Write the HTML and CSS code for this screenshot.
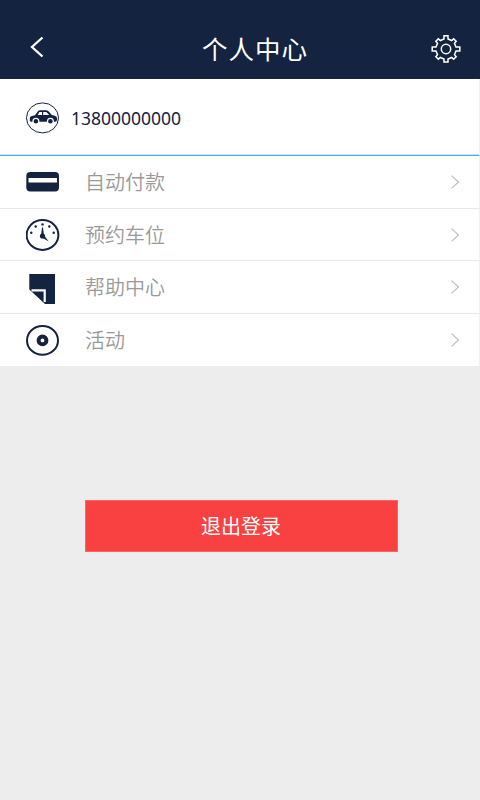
FILE: index.html
```html
<!DOCTYPE html>
<html lang="zh-CN">
<head>
<meta charset="utf-8">
<title>个人中心</title>
<link rel="stylesheet" href="styles.css">
</head>
<body>
<header class="header">
  <svg class="back" width="16" height="22" viewBox="0 0 16 22"><path d="M13.5 1.5L3 11L13.5 20.5"/></svg>
  <h1 class="title">个人中心</h1>
  <svg class="gear" width="30" height="30" viewBox="-15 -15 30 30">
    <path d="M-2-10V-13.3H2V-10L5.66-8.49L7.64-10.18L10.18-7.64L8.49-5.66L10-2H13.8V2H10L8.49 5.66L10.18 7.64L7.64 10.18L5.66 8.49L2 10V13H-2V10L-5.66 8.49L-7.64 10.18L-10.18 7.64L-8.49 5.66L-10 2H-13.8V-2H-10L-8.49-5.66L-10.18-7.64L-7.64-10.18L-5.66-8.49Z"/>
    <circle r="4.7"/>
  </svg>
</header>
<main>
  <section class="profile">
    <svg class="icon" width="34" height="34" viewBox="0 0 34 34">
      <ellipse class="thin" cx="16.5" cy="16.9" rx="16" ry="15"/>
      <path class="fill" d="M3.8 19.5V16.8Q4 15 9 14.2L11.3 11Q12.2 9.3 14 9.3H20.3Q22 9.3 23 10.8L25.8 13.9Q31 14.8 31 17V19Q31 20.7 29 20.7H5.6Q3.8 20.7 3.8 19.5Z"/>
      <path class="white" d="M11.7 14L13.4 11H16V14ZM17.2 11H20.3L23.2 14H17.2Z"/>
      <circle class="wheel" cx="9.9" cy="20.2" r="2.9"/><circle class="wheel" cx="24.4" cy="20.2" r="2.9"/>
    </svg>
    <span class="phone">13800000000</span>
  </section>
  <nav>
    <a class="row">
      <svg class="icon" width="34" height="34" viewBox="0 0 34 34"><rect class="fill" x=".3" y="7" width="32.7" height="19.5" rx="4"/><rect class="white" x="2.5" y="13" width="28.5" height="4.5"/></svg>
      <span class="label">自动付款</span>
      <svg class="arrow" width="10" height="14" viewBox="0 0 10 14"><path d="M1.5 .7L8.5 7L1.5 13.3"/></svg>
    </a>
    <a class="row short">
      <svg class="icon" width="34" height="34" viewBox="0 0 34 34">
        <ellipse class="ring" cx="16.5" cy="17" rx="15.9" ry="14.9"/>
        <circle class="fill" cx="16.5" cy="18" r="2.6"/>
        <path class="fill" d="M16 9.5H17L17.9 17H15.1ZM17.5 16.8L22.8 23.6L15.8 19.5Z"/>
        <g class="fill"><circle cx="16.5" cy="6.4" r="1.2"/><circle cx="9.7" cy="8.5" r="1.2"/><circle cx="23.3" cy="8.5" r="1.2"/><circle cx="5.3" cy="14.7" r="1.2"/><circle cx="27.7" cy="14.7" r="1.2"/></g>
      </svg>
      <span class="label">预约车位</span>
      <svg class="arrow" width="10" height="14" viewBox="0 0 10 14"><path d="M1.5 .7L8.5 7L1.5 13.3"/></svg>
    </a>
    <a class="row">
      <svg class="icon" width="34" height="34" viewBox="0 0 34 34"><path class="fill" d="M3.3 4H29V34H19L3.3 19.4Z"/><path class="fold" d="M5.5 20.3H18.7V32"/></svg>
      <span class="label">帮助中心</span>
      <svg class="arrow" width="10" height="14" viewBox="0 0 10 14"><path d="M1.5 .7L8.5 7L1.5 13.3"/></svg>
    </a>
    <a class="row">
      <svg class="icon" width="34" height="34" viewBox="0 0 34 34"><ellipse class="ring" cx="16.5" cy="17.4" rx="15.5" ry="14.4"/><circle class="disc" cx="16.5" cy="17.4" r="3.9"/></svg>
      <span class="label">活动</span>
      <svg class="arrow" width="10" height="14" viewBox="0 0 10 14"><path d="M1.5 .7L8.5 7L1.5 13.3"/></svg>
    </a>
  </nav>
  <button class="logout">退出登录</button>
</main>
</body>
</html>
```
FILE: styles.css
```css
* { box-sizing: border-box; }
body {
  margin: 0;
  min-height: 800px;
  background: #ededed;
  color: #14233f;
  font-family: "Noto Sans CJK SC", sans-serif;
}
svg { display: block; flex: none; fill: none; }
.header {
  height: 79px;
  display: grid;
  grid-template-columns: 60px 1fr 60px;
  align-items: center;
  background: #14233f;
  padding: 17px 0 0;
}
.back { margin: -3px 0 0 29px; stroke: #fff; stroke-width: 2.3; }
.title {
  margin: -1px 0 0 30px;
  text-align: center;
  color: #fff;
  font-size: 25.5px;
  font-weight: 400;
  line-height: 36px;
  letter-spacing: 1px;
}
.gear { margin: 1px 0 0 11px; stroke: #fff; stroke-width: 1.5; }
.profile {
  height: 77px;
  display: flex;
  align-items: center;
  padding: 1px 0 0 26px;
  background: #fff;
  border-right: 1px solid #f2f2f2;
  border-bottom: 1px solid #4fa9f0;
  box-shadow: inset 0 -1px #c5e2fa;
}
.phone { margin-left: 11px; font-family: "Noto Sans", sans-serif; font-size: 17.5px; line-height: 26px; }
.row {
  height: 53px;
  display: flex;
  align-items: center;
  padding: 0 19px 0 26px;
  background: #fff;
  border-right: 1px solid #f2f2f2;
  border-bottom: 1px solid #e9e9e9;
}
.row.short { height: 52px; }
.row:last-child { height: 52px; border-bottom: 0; }
.label { flex: 1; margin-left: 25px; color: #999; font-size: 20px; font-weight: 350; line-height: 28px; }
.arrow { stroke: #bbb; stroke-width: 1.1; }
.fill { fill: #14233f; }
.white { fill: #fff; }
.thin { stroke: #14233f; stroke-width: 1; }
.ring { stroke: #14233f; stroke-width: 2; }
.disc { stroke: #14233f; stroke-width: 4; }
.wheel { fill: #14233f; stroke: #fff; stroke-width: 1.2; }
.fold { stroke: #fff; stroke-width: 2.2; }
.logout {
  display: block;
  width: 313px;
  height: 52px;
  margin: 134px 0 0 85px;
  padding: 0 1px 0 0;
  border: 1px solid #f96566;
  background: #f94142;
  color: #fff;
  font: 400 20px/28px "Noto Sans CJK SC", sans-serif;
}
```
